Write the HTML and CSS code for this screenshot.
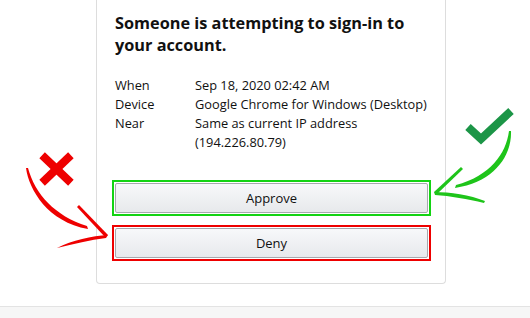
FILE: index.html
```html
<!doctype html>
<html>
  <head>
    <meta name="viewport" content="width=device-width, initial-scale=1.0" />
    <title>Approve sign-in</title>
    <link rel="stylesheet" href="styles.css">
  </head>
  <body>
    <div class="page">
      <div class="card">
        <h1 class="title">Someone is attempting to sign-in to your account.</h1>

        <div class="details">
          <span class="label">When</span>
          <span class="value">Sep 18, 2020 02:42 AM</span>
          <span class="label">Device</span>
          <span class="value">Google Chrome for Windows (Desktop)</span>
          <span class="label">Near</span>
          <span class="value">Same as current IP address (194.226.80.79)</span>
        </div>

        <div class="actions">
          <div class="outline green">
            <button class="btn">Approve</button>
          </div>
          <div class="outline red">
            <button class="btn">Deny</button>
          </div>
        </div>
      </div>
    </div>
    <div class="footer"></div>

    <!-- hand drawn marks over the screenshot -->
    <svg class="marks" width="530" height="318" viewBox="0 0 530 318">
      <g stroke="#ee0000" stroke-width="8" stroke-linecap="square">
        <line x1="45" y1="158" x2="68" y2="180" />
        <line x1="68" y1="158" x2="45" y2="180" />
      </g>
      <path fill="#ee0000" d="M26 168 C29 190 48 222 88 229 L87 226 C55 216 35 194 28 168 Z" />
      <path fill="#ee0000" d="M77 207 L79 205 L108 235 L105 237 Z" />
      <path fill="#ee0000" d="M57 248 C72 240 92 236 108 235 L106 238 C90 240 74 244 57 248 Z" />

      <polyline points="468,127 481,139 511,111" fill="none" stroke="#1c9547" stroke-width="8" />
      <path fill="#1ec41a" d="M511 131 C512 155 495 182 455 188 L456 185 C490 176 506 154 509 131 Z" />
      <path fill="#1ec41a" d="M461 167 L463 169 L437 194 L434 192 Z" />
      <path fill="#1ec41a" d="M434 192 C450 192 470 195 485 201 L484 203 C468 199 450 196 435 195 Z" />
    </svg>
  </body>
</html>
```

FILE: styles.css
```css
html,
body {
  margin: 0;
  background: #fff;
  color: #111;
  font-family: 'Open Sans', 'Liberation Sans', sans-serif;
}

body {
  position: relative;
  width: 530px;
  height: 318px;
  overflow: hidden;
}

.page {
  height: 306px;
}

.card {
  box-sizing: border-box;
  width: 350px;
  height: 284px;
  margin-left: 96px;
  padding: 0 14px 0 15px;
  border: 1px solid #dddddd;
  border-top: none;
  border-radius: 0 0 4px 4px;
}

.title {
  margin: 0;
  padding: 12px 0 0 3px;
  font-size: 16.3px;
  line-height: 22px;
  font-weight: 700;
}

.details {
  display: grid;
  grid-template-columns: 80px 1fr;
  margin-top: 20px;
  padding-left: 3px;
  font-size: 12.8px;
  line-height: 19px;
}

.actions {
  display: flex;
  flex-direction: column;
  gap: 9px;
  margin-top: 28px;
}

.outline {
  padding: 1px;
  border: 2px solid;
  height: 30px;
}

.outline.green {
  border-color: #13d313;
}

.outline.red {
  border-color: #ee0000;
}

.btn {
  display: block;
  box-sizing: border-box;
  width: 100%;
  height: 30px;
  border: 1px solid #a6a8ad;
  border-radius: 2px;
  background: linear-gradient(#f7f8fa, #e7e9ec);
  color: #111;
  font-family: inherit;
  font-size: 13px;
}

.footer {
  height: 12px;
  border-top: 1px solid #e3e3e3;
  background: #f6f6f6;
}

.marks {
  position: absolute;
  left: 0;
  top: 0;
  pointer-events: none;
}
```
